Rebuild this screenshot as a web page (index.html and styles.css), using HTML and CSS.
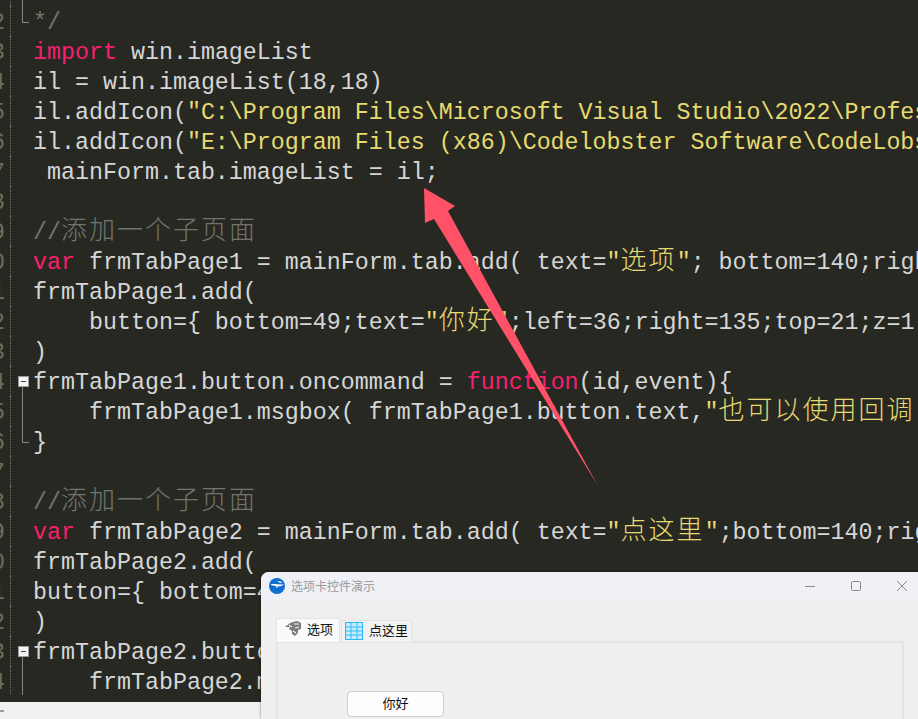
FILE: index.html
```html
<!DOCTYPE html>
<html lang="zh">
<head>
<meta charset="utf-8">
<title>选项卡控件演示</title>
<link rel="stylesheet" href="styles.css">
</head>
<body>
<main class="editor">
  <div class="row clipped"><span class="num">1</span><span class="fold line"></span><code class="c">      <span class="z">图标文件的路径</span> <span class="z">可以</span>,<span class="z">通过任意文件获取图标</span>,<span class="z">也可以使用其他</span></code></div>
  <div class="row"><span class="num">2</span><span class="fold end"></span><code class="c">*/</code></div>
  <div class="row"><span class="num">3</span><span class="fold"></span><code><span class="k">import</span> win.imageList</code></div>
  <div class="row"><span class="num">4</span><span class="fold"></span><code>il = win.imageList(18,18)</code></div>
  <div class="row"><span class="num">5</span><span class="fold"></span><code>il.addIcon(<span class="s">"C:\Program Files\Microsoft Visual Studio\2022\Professional"</span></code></div>
  <div class="row"><span class="num">6</span><span class="fold"></span><code>il.addIcon(<span class="s">"E:\Program Files (x86)\Codelobster Software\CodeLobsterIDE"</span></code></div>
  <div class="row"><span class="num">7</span><span class="fold"></span><code> mainForm.tab.imageList = il;</code></div>
  <div class="row"><span class="num">8</span><span class="fold"></span><code></code></div>
  <div class="row"><span class="num">9</span><span class="fold"></span><code class="c">//<span class="z">添加一个子页面</span></code></div>
  <div class="row"><span class="num">0</span><span class="fold"></span><code><span class="k">var</span> frmTabPage1 = mainForm.tab.add( text=<span class="s">"<span class="z">选项</span>"</span>; bottom=140;right=</code></div>
  <div class="row"><span class="num">1</span><span class="fold"></span><code>frmTabPage1.add(</code></div>
  <div class="row"><span class="num">2</span><span class="fold"></span><code>    button={ bottom=49;text=<span class="s">"<span class="z">你好</span>"</span>;left=36;right=135;top=21;z=1</code></div>
  <div class="row"><span class="num">3</span><span class="fold"></span><code>)</code></div>
  <div class="row"><span class="num">4</span><span class="fold box"></span><code>frmTabPage1.button.oncommand = <span class="k">function</span>(id,event){</code></div>
  <div class="row"><span class="num">5</span><span class="fold line"></span><code>    frmTabPage1.msgbox( frmTabPage1.button.text,<span class="s">"<span class="z">也可以使用回调</span></span></code></div>
  <div class="row"><span class="num">6</span><span class="fold end"></span><code>}</code></div>
  <div class="row"><span class="num">7</span><span class="fold"></span><code></code></div>
  <div class="row"><span class="num">8</span><span class="fold"></span><code class="c">//<span class="z">添加一个子页面</span></code></div>
  <div class="row"><span class="num">9</span><span class="fold"></span><code><span class="k">var</span> frmTabPage2 = mainForm.tab.add( text=<span class="s">"<span class="z">点这里</span>"</span>;bottom=140;right=</code></div>
  <div class="row"><span class="num">0</span><span class="fold"></span><code>frmTabPage2.add(</code></div>
  <div class="row"><span class="num">1</span><span class="fold"></span><code>button={ bottom=49;text=<span class="s">"<span class="z">你好</span>"</span></code></div>
  <div class="row"><span class="num">2</span><span class="fold"></span><code>)</code></div>
  <div class="row"><span class="num">3</span><span class="fold box"></span><code>frmTabPage2.button.oncommand</code></div>
  <div class="row"><span class="num">4</span><span class="fold line"></span><code>    frmTabPage2.msgbox(</code></div>
  <div class="row"><span class="num">5</span><span class="fold line"></span><code>}</code></div>
</main>

<svg class="arrow" viewBox="0 0 918 719" aria-hidden="true">
  <polygon points="424,188 455,206 448,211 598,486 434,219 425,223" fill="#ff5268"/>
</svg>

<div class="taskbar"><span class="dash"></span></div>

<section class="window">
  <header class="titlebar">
    <svg class="app-icon" viewBox="0 0 16 16" aria-hidden="true">
      <circle cx="8" cy="8" r="8" fill="#0c6fd1"/>
      <path d="M1.5 6.6 C5 5.2 10 7 15 6.2 C13.5 8 11 8.4 9 8.2 L7.6 10.2 L7 8 C5 7.9 3 7.6 1.5 6.6Z" fill="#fff"/>
      <path d="M8 3 C10 2.6 12.4 3.4 13.4 5 L10.6 4.8 C9.8 4 9 3.4 8 3Z" fill="#fff"/>
    </svg>
    <span class="title">选项卡控件演示</span>
    <div class="controls">
      <svg class="ctl" viewBox="0 0 12 12" aria-hidden="true"><path d="M1 6.5H11" stroke="#8c8c8c" fill="none"/></svg>
      <svg class="ctl" viewBox="0 0 12 12" aria-hidden="true"><rect x="1.5" y="1.5" width="9" height="9" rx="1" stroke="#8c8c8c" fill="none"/></svg>
      <svg class="ctl" viewBox="0 0 12 12" aria-hidden="true"><path d="M1 1L11 11M11 1L1 11" stroke="#8c8c8c" fill="none"/></svg>
    </div>
  </header>
  <div class="client">
    <div class="tabs">
      <div class="tab active">
        <svg class="tab-icon" viewBox="0 0 18 18" aria-hidden="true">
          <path d="M9 2L13 1L17 3V9L14 10V13L11 16L8 14V11L5 9L6 7L1 7L6 3Z" fill="#7d7d7d"/>
          <path d="M10 4L15 4M11 8L15 7M9 11L12 13M5 5L8 7" stroke="#f5f5f5" stroke-width="1.2" fill="none"/>
        </svg>
        <span class="tab-label">选项</span>
      </div>
      <div class="tab">
        <svg class="tab-icon" viewBox="0 0 18 18" aria-hidden="true">
          <rect x="0.5" y="0.5" width="17" height="17" fill="#c5ecfd" stroke="#2db8f6"/>
          <path d="M6 1V17M12 1V17M1 5H17M1 9H17M1 13H17" stroke="#35bcf7" fill="none"/>
        </svg>
        <span class="tab-label">点这里</span>
      </div>
    </div>
    <div class="panel">
      <button class="btn" type="button">你好</button>
    </div>
  </div>
</section>
</body>
</html>
```
FILE: styles.css
```css
* { box-sizing: border-box; }

html, body {
  margin: 0;
  height: 100%;
  overflow: hidden;
  background: #282822;
}

.editor {
  height: 719px;
  overflow: hidden;
  margin-top: -24px;
  font-family: "Liberation Mono", monospace;
  font-size: 23.32px;
  color: #d6d6d6;
  background: #282822;
}

.row {
  display: flex;
  height: 30px;
  line-height: 30px;
}

.row.clipped code {
  padding-top: 0;
  margin-top: -1px;
}

.num {
  flex: none;
  width: 11px;
  padding-right: 5px;
  padding-top: 2px;
  border-right: 1px dotted #77776a;
  color: #6f6d58;
  direction: rtl;
  overflow: hidden;
  white-space: nowrap;
}

.fold {
  flex: none;
  width: 22px;
  position: relative;
}

.fold.line::before,
.fold.box::after {
  content: "";
  position: absolute;
  left: 11px;
  top: 0;
  bottom: 0;
  width: 1px;
  background: #85857f;
}

.fold.end::before {
  content: "";
  position: absolute;
  left: 11px;
  top: 0;
  height: 16px;
  width: 6px;
  border-left: 1px solid #85857f;
  border-bottom: 1px solid #85857f;
}

.fold.box::before {
  content: "";
  position: absolute;
  z-index: 1;
  left: 7px;
  top: 10px;
  width: 9px;
  height: 9px;
  border: 1px solid #9a9a9a;
  background: linear-gradient(#444, #444) center / 5px 1px no-repeat, #f4f4f4;
}

.fold.box::after {
  top: 15px;
}

code {
  font: inherit;
  white-space: pre;
  flex: none;
  padding-top: 2px;
}

.k { color: #f6206f; }
.s { color: #e6da70; }
.c { color: #70756f; }

.z {
  font-family: "Noto Sans CJK SC", sans-serif;
  font-size: 26px;
  font-weight: 300;
  letter-spacing: 2px;
  line-height: 0;
}

.arrow {
  position: absolute;
  left: 0;
  top: 0;
  width: 918px;
  height: 719px;
}

.taskbar {
  position: absolute;
  left: 0;
  right: 0;
  bottom: 0;
  height: 17px;
  background: #f1f1f1;
}

.dash {
  position: absolute;
  left: 0;
  top: 8px;
  width: 4px;
  height: 2px;
  background: #9a9a9a;
}

.window {
  position: absolute;
  left: 261px;
  top: 572px;
  width: 657px;
  height: 147px;
  display: flex;
  flex-direction: column;
  background: #efefef;
  border-top-left-radius: 8px;
  box-shadow: 0 0 3px rgba(0, 0, 0, 0.45);
  font-family: "Noto Sans CJK SC", sans-serif;
  overflow: hidden;
}

.titlebar {
  flex: none;
  display: flex;
  align-items: center;
  height: 30px;
  padding-left: 8px;
  background: #f0f1f6;
}

.app-icon {
  flex: none;
  width: 16px;
  height: 16px;
  margin-top: -2px;
}

.title {
  margin-left: 6px;
  padding-bottom: 4px;
  font-size: 12px;
  color: #9a9a9a;
}

.controls {
  margin-left: auto;
  display: flex;
  gap: 34px;
  padding-right: 10px;
  padding-bottom: 2px;
}

.ctl {
  width: 12px;
  height: 12px;
}

.client {
  flex: 1;
  padding: 16px 14px 0 15px;
  display: flex;
  flex-direction: column;
}

.tabs {
  display: flex;
  align-items: flex-end;
  gap: 1px;
  height: 24px;
  margin-bottom: -1px;
  position: relative;
  z-index: 1;
}

.tab {
  display: flex;
  align-items: center;
  height: 22px;
  width: 71px;
  padding-left: 3px;
  gap: 6px;
  font-size: 13px;
  color: #111;
  background: #f2f2f2;
  border: 1px solid #e4e4e4;
  border-bottom: none;
}

.tab.active {
  height: 24px;
  width: 64px;
  padding-left: 7px;
  gap: 5px;
  background: #fafafa;
  border-bottom: 1px solid #fafafa;
}

.tab-icon {
  flex: none;
  width: 18px;
  height: 18px;
  margin-bottom: 2px;
}

.tab-label {
  padding-bottom: 4px;
}

.panel {
  flex: 1;
  border: 2px solid #e4e4e4;
  border-bottom: none;
  padding: 48px 0 0 69px;
}

.btn {
  display: block;
  width: 97px;
  height: 26px;
  padding: 0 0 4px;
  font: 13px "Noto Sans CJK SC", sans-serif;
  color: #111;
  background: #fdfdfd;
  border: 1px solid #cfcfcf;
  border-radius: 4px;
}
```
